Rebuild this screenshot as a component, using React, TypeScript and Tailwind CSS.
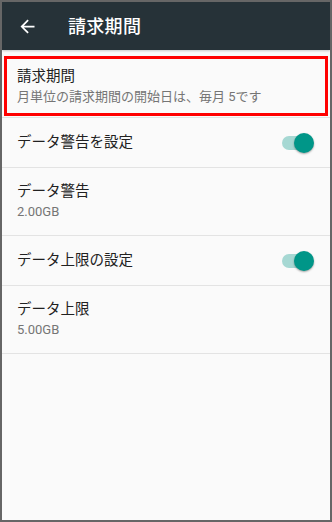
import React from 'react';

const font = { fontFamily: 'Roboto, "Noto Sans CJK JP", sans-serif' };

function Toggle() {
  return (
    <div className="relative w-[32px] h-[20px] flex items-center">
      <div className="w-[30px] h-[14px] rounded-full bg-[#a6d8d3]" />
      <div className="absolute right-0 top-0 w-[20px] h-[20px] rounded-full bg-[#009688] shadow-[0_1px_2px_rgba(0,0,0,0.35)]" />
    </div>
  );
}

function TwoLine({ title, sub }: { title: string; sub: string }) {
  return (
    <div className="h-[68px] border-b border-[#e3e3e3] flex flex-col justify-center pl-[15px]">
      <span className="text-[14.5px] leading-[20px] text-[#212121]">{title}</span>
      <span className="text-[13px] leading-[18px] text-[#757575] mt-[1px]">{sub}</span>
    </div>
  );
}

function SwitchRow({ title }: { title: string }) {
  return (
    <div className="h-[50px] border-b border-[#e3e3e3] flex items-center justify-between pl-[15px] pr-[16px]">
      <span className="text-[14.5px] text-[#212121]">{title}</span>
      <Toggle />
    </div>
  );
}

export default function App() {
  return (
    <div className="w-[332px] h-[522px] border-2 border-[#666666] bg-[#fafafa] flex flex-col overflow-hidden" style={font}>
      <header className="h-[48px] bg-[#263238] flex items-center shrink-0 shadow-[0_1px_2px_rgba(0,0,0,0.2)]">
        <svg width="21" height="21" viewBox="0 0 24 24" className="ml-[15px]">
          <path d="M20 11H7.83l5.59-5.59L12 4l-8 8 8 8 1.41-1.41L7.83 13H20v-2z" fill="#ffffff" />
        </svg>
        <span className="ml-[30px] text-[18px] font-medium text-white tracking-[0.3px]">請求期間</span>
      </header>
      <div className="h-[68px] border-b border-[#e3e3e3] pt-[6px] px-[2px]">
        <div className="h-[60px] border-[3px] border-[#ff0000] flex flex-col justify-center pl-[10px]">
          <span className="text-[14.5px] leading-[20px] text-[#212121]">請求期間</span>
          <span className="text-[13px] leading-[18px] text-[#757575] mt-[1px]">月単位の請求期間の開始日は、毎月 5です</span>
        </div>
      </div>
      <SwitchRow title="データ警告を設定" />
      <TwoLine title="データ警告" sub="2.00GB" />
      <SwitchRow title="データ上限の設定" />
      <TwoLine title="データ上限" sub="5.00GB" />
    </div>
  );
}
